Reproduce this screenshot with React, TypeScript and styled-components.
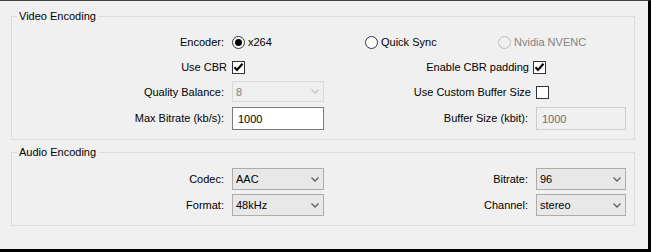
import React from "react";
import styled, { createGlobalStyle } from "styled-components";

const GlobalStyle = createGlobalStyle`
  html, body {
    margin: 0;
    padding: 0;
    background: #f0f0f0;
  }
  * {
    box-sizing: border-box;
  }
`;

const Window = styled.div`
  width: 651px;
  height: 252px;
  background: #f0f0f0;
  border-top: 1px solid #404040;
  border-right: 3px solid #000;
  border-bottom: 3px solid #000;
  padding: 8px 13px 0 11px;
  font-family: "Liberation Sans", Arial, sans-serif;
  font-size: 11px;
  color: #000;
  display: flex;
  flex-direction: column;
  gap: 5px;
`;

const GroupBox = styled.fieldset`
  margin: 0;
  padding: 0;
  min-width: 0;
  border: 1px solid #dcdcdc;

  legend {
    margin-left: 5px;
    padding: 0 2px;
    line-height: 14px;
    font-size: 11px;
  }
`;

const Grid = styled.div<{ $rows: string; $gap: number; $top: number }>`
  display: grid;
  grid-template-columns: 220px 92px 212px 90px;
  grid-template-rows: ${(p) => p.$rows};
  row-gap: ${(p) => p.$gap}px;
  padding: ${(p) => p.$top}px 0 9px 0;
  align-items: center;
`;

const Label = styled.label<{ $pad?: number }>`
  justify-self: end;
  padding-right: ${(p) => p.$pad ?? 8}px;
  white-space: nowrap;
`;

const RadioGroup = styled.div`
  grid-column: 2 / span 3;
  display: grid;
  grid-template-columns: 133px 133px 133px;
`;

const RadioOption = styled.label<{ $disabled?: boolean }>`
  display: flex;
  align-items: center;
  gap: 3px;
  color: ${(p) => (p.$disabled ? "#838383" : "#000")};
  white-space: nowrap;
`;

const RadioDot = styled.span<{ $checked?: boolean; $disabled?: boolean }>`
  width: 13px;
  height: 13px;
  border-radius: 50%;
  border: 1px solid ${(p) => (p.$disabled ? "#bcbcbc" : "#333")};
  background: ${(p) => (p.$disabled ? "#f0f0f0" : "#fff")};
  display: flex;
  align-items: center;
  justify-content: center;

  &::after {
    content: "";
    width: 7px;
    height: 7px;
    border-radius: 50%;
    background: #000;
    display: ${(p) => (p.$checked ? "block" : "none")};
  }
`;

const CheckBox = styled.span<{ $nudge?: number }>`
  width: 13px;
  height: 13px;
  border: 1px solid #333;
  background: #fff;
  display: flex;
  align-items: center;
  justify-content: center;
  margin-left: ${(p) => p.$nudge ?? 0}px;
`;

const Combo = styled.div<{ $disabled?: boolean; $height?: number }>`
  width: 100%;
  height: ${(p) => p.$height ?? 22}px;
  border: 1px solid ${(p) => (p.$disabled ? "#d9d9d9" : "#acacac")};
  background: ${(p) => (p.$disabled ? "#efefef" : "#e8e8e8")};
  color: ${(p) => (p.$disabled ? "#838383" : "#000")};
  display: flex;
  align-items: center;
  justify-content: space-between;
  padding: 0 4px 0 3px;
  align-self: start;
`;

const TextBox = styled.div<{ $disabled?: boolean }>`
  width: 100%;
  height: 23px;
  border: 1px solid ${(p) => (p.$disabled ? "#cccccc" : "#7a7a7a")};
  background: ${(p) => (p.$disabled ? "#f0f0f0" : "#fff")};
  color: ${(p) => (p.$disabled ? "#6d6d6d" : "#000")};
  display: flex;
  align-items: center;
  padding-left: 5px;
  align-self: end;
`;

const Chevron = ({ disabled }: { disabled?: boolean }) => (
  <svg width="8" height="5" viewBox="0 0 8 5">
    <path
      d="M0.5 0.5 L4 4 L7.5 0.5"
      fill="none"
      stroke={disabled ? "#c4c4c4" : "#606060"}
      strokeWidth="1.3"
    />
  </svg>
);

const Tick = () => (
  <svg width="11" height="11" viewBox="0 0 11 11">
    <path d="M1.5 5.3 L4 8 L9.5 1.8" fill="none" stroke="#000" strokeWidth="2.1" />
  </svg>
);

const Select = ({ value, disabled }: { value: string; disabled?: boolean }) => (
  <Combo $disabled={disabled} $height={disabled ? 21 : 22}>
    <span>{value}</span>
    <Chevron disabled={disabled} />
  </Combo>
);

export default function App() {
  return (
    <>
      <GlobalStyle />
      <Window>
        <GroupBox>
          <legend>Video Encoding</legend>
          <Grid $rows="22px 22px 22px 24px" $gap={3} $top={8}>
            <Label>Encoder:</Label>
            <RadioGroup>
              <RadioOption>
                <RadioDot $checked />
                x264
              </RadioOption>
              <RadioOption>
                <RadioDot />
                Quick Sync
              </RadioOption>
              <RadioOption $disabled>
                <RadioDot $disabled />
                Nvidia NVENC
              </RadioOption>
            </RadioGroup>

            <Label $pad={5}>Use CBR</Label>
            <CheckBox>
              <Tick />
            </CheckBox>
            <Label $pad={7}>Enable CBR padding</Label>
            <CheckBox $nudge={-3}>
              <Tick />
            </CheckBox>

            <Label>Quality Balance:</Label>
            <Select value="8" disabled />
            <Label $pad={5}>Use Custom Buffer Size</Label>
            <CheckBox />

            <Label>Max Bitrate (kb/s):</Label>
            <TextBox>1000</TextBox>
            <Label>Buffer Size (kbit):</Label>
            <TextBox $disabled>1000</TextBox>
          </Grid>
        </GroupBox>

        <GroupBox>
          <legend>Audio Encoding</legend>
          <Grid $rows="22px 22px" $gap={4} $top={9}>
            <Label>Codec:</Label>
            <Select value="AAC" />
            <Label>Bitrate:</Label>
            <Select value="96" />

            <Label>Format:</Label>
            <Select value="48kHz" />
            <Label>Channel:</Label>
            <Select value="stereo" />
          </Grid>
        </GroupBox>
      </Window>
    </>
  );
}
